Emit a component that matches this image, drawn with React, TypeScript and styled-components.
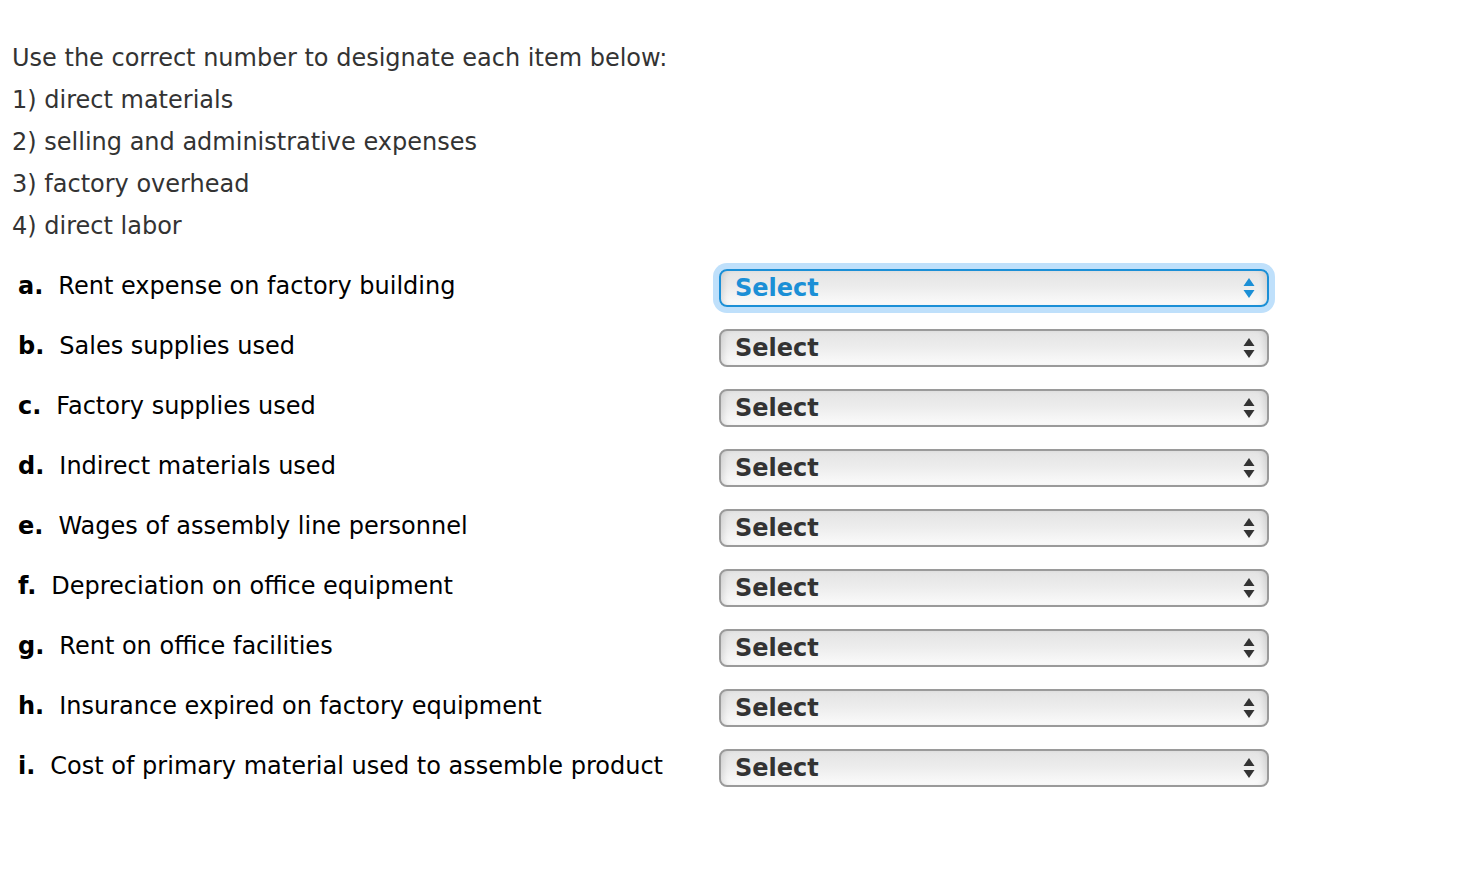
import React from 'react';
import styled, { createGlobalStyle } from 'styled-components';

const GlobalStyle = createGlobalStyle`
  html, body {
    margin: 0;
    padding: 0;
    background: #ffffff;
  }
  body {
    font-family: 'DejaVu Sans', Verdana, sans-serif;
  }
`;

const categories = [
  'direct materials',
  'selling and administrative expenses',
  'factory overhead',
  'direct labor',
];

const items = [
  { key: 'a', text: 'Rent expense on factory building' },
  { key: 'b', text: 'Sales supplies used' },
  { key: 'c', text: 'Factory supplies used' },
  { key: 'd', text: 'Indirect materials used' },
  { key: 'e', text: 'Wages of assembly line personnel' },
  { key: 'f', text: 'Depreciation on office equipment' },
  { key: 'g', text: 'Rent on office facilities' },
  { key: 'h', text: 'Insurance expired on factory equipment' },
  { key: 'i', text: 'Cost of primary material used to assemble product' },
];

const Page = styled.div`
  padding: 37px 0 0 12px;
`;

const Intro = styled.div`
  color: #333333;
  font-size: 24px;
  line-height: 42px;
`;

const Line = styled.div``;

const Items = styled.div`
  margin-top: 11px;
  display: flex;
  flex-direction: column;
`;

const Row = styled.div`
  display: grid;
  grid-template-columns: 707px 550px;
  align-items: center;
  height: 60px;
`;

const Label = styled.div`
  padding: 0 0 4px 6px;
  color: #000000;
  font-size: 24px;
  white-space: nowrap;
`;

const Key = styled.b`
  margin-right: 15px;
`;

const SelectBox = styled.div<{ $focused?: boolean }>`
  position: relative;
  box-sizing: border-box;
  height: 38px;
  display: flex;
  align-items: center;
  padding: 0 0 0 14px;
  border: 2px solid ${p => (p.$focused ? '#1b8fd6' : '#9a9a9a')};
  border-radius: 8px;
  background: linear-gradient(#e4e4e4 0%, #ececec 45%, #fbfbfb 100%);
  box-shadow: ${p =>
    p.$focused
      ? '0 0 0 6px #bfe0fb, inset 6px 0 6px -4px rgba(0,0,0,0.12), inset -6px 0 6px -4px rgba(0,0,0,0.12)'
      : 'inset 6px 0 6px -4px rgba(0,0,0,0.12), inset -6px 0 6px -4px rgba(0,0,0,0.12)'};
  color: ${p => (p.$focused ? '#1b8fd6' : '#333333')};
  font-size: 24px;
  font-weight: bold;
  cursor: pointer;
`;

const Arrows = styled.svg`
  position: absolute;
  right: 12px;
  top: 50%;
  transform: translateY(-50%);
`;

const Select = ({ focused }: { focused?: boolean }) => (
  <SelectBox $focused={focused} role="button">
    Select
    <Arrows width="12" height="22" viewBox="0 0 12 22">
      <path d="M6 1 L11.5 9 L0.5 9 Z" fill={focused ? '#1b8fd6' : '#333333'} />
      <path d="M6 21 L11.5 13 L0.5 13 Z" fill={focused ? '#1b8fd6' : '#333333'} />
    </Arrows>
  </SelectBox>
);

const App = () => (
  <>
    <GlobalStyle />
    <Page>
      <Intro>
        <Line>Use the correct number to designate each item below:</Line>
        {categories.map((c, i) => (
          <Line key={c}>
            {i + 1}) {c}
          </Line>
        ))}
      </Intro>
      <Items>
        {items.map((it, i) => (
          <Row key={it.key}>
            <Label>
              <Key>{it.key}.</Key>
              {it.text}
            </Label>
            <Select focused={i === 0} />
          </Row>
        ))}
      </Items>
    </Page>
  </>
);

export default App;
